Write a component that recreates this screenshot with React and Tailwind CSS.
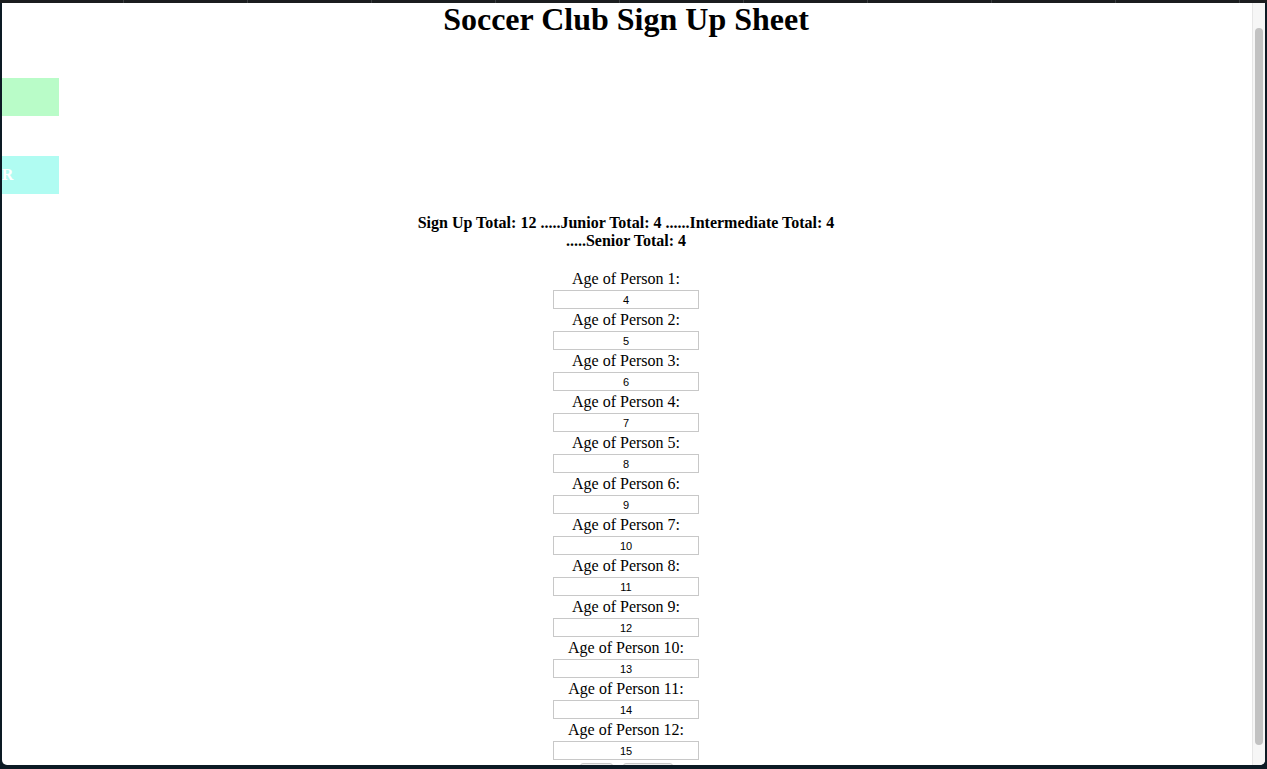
import React from 'react'

const ages = [4, 5, 6, 7, 8, 9, 10, 11, 12, 13, 14, 15]

function TopStrip() {
  // thin dark strip above the page, with faint tab dividers
  return (
    <div className="flex h-[3px] bg-[#1b1d1f]">
      {Array.from({ length: 10 }).map((_, i) => (
        <div key={i} className="w-[124px] h-full border-r border-[#3a3d40]" />
      ))}
    </div>
  )
}

function Scrollbar() {
  return (
    <div className="w-[13px] shrink-0 bg-[#f6f6f6] border-l border-[#e6e6e6] flex justify-center">
      <div className="mt-[25px] w-[8px] h-[717px] rounded-full bg-[#c2c2c2]" />
    </div>
  )
}

function AgeRow({ n, value }) {
  return (
    <div className="flex flex-col items-center">
      <div className="leading-[18px] h-[18px] text-[16px]">Age of Person {n}:</div>
      <input
        readOnly
        value={value}
        className="mt-[2px] mb-[2px] w-[146px] h-[19px] border border-[#c8c8c8] text-center text-[11px] text-black outline-none bg-white"
        style={{ fontFamily: '"Liberation Sans", Arial, sans-serif' }}
      />
    </div>
  )
}

export default function App() {
  return (
    <div className="w-[1267px] h-[769px] bg-[#0c1a24] overflow-hidden flex flex-col">
      <TopStrip />
      <div className="flex-1 mx-[2px] mb-[4px] bg-white rounded-b-[5px] overflow-hidden flex">
        <main
          className="flex-1 pr-[2px] overflow-hidden text-black leading-[normal]"
          style={{ fontFamily: '"Liberation Serif", "Times New Roman", serif' }}
        >
          <h1 className="text-[32px] font-bold leading-[32px] text-center">Soccer Club Sign Up Sheet</h1>

          <div className="mt-[43px] w-[57px] h-[38px] bg-[#b9fcc8]" />

          <div className="mt-[40px] w-[57px] h-[38px] bg-[#b0fcf2] overflow-hidden flex items-center">
            <span className="whitespace-nowrap text-white font-bold text-[16px] -ml-[11px]">ER</span>
          </div>

          <p className="mt-[20px] mx-auto max-w-[440px] text-center font-bold text-[16px] leading-[normal]">
            Sign Up Total: 12 .....Junior Total: 4 ......Intermediate Total: 4 .....Senior Total: 4
          </p>

          <form className="mt-[20px] flex flex-col items-center">
            {ages.map((a, i) => (
              <AgeRow key={i} n={i + 1} value={a} />
            ))}
            <div className="flex gap-[10px] mt-[1px]">
              <button type="button" className="w-[33px] h-[20px] border border-[#c8c8c8] rounded-[3px] bg-[#efefef] text-[11px]">Add</button>
              <button type="button" className="w-[50px] h-[20px] border border-[#c8c8c8] rounded-[3px] bg-[#efefef] text-[11px]">Submit</button>
            </div>
          </form>
        </main>
        <Scrollbar />
      </div>
    </div>
  )
}
